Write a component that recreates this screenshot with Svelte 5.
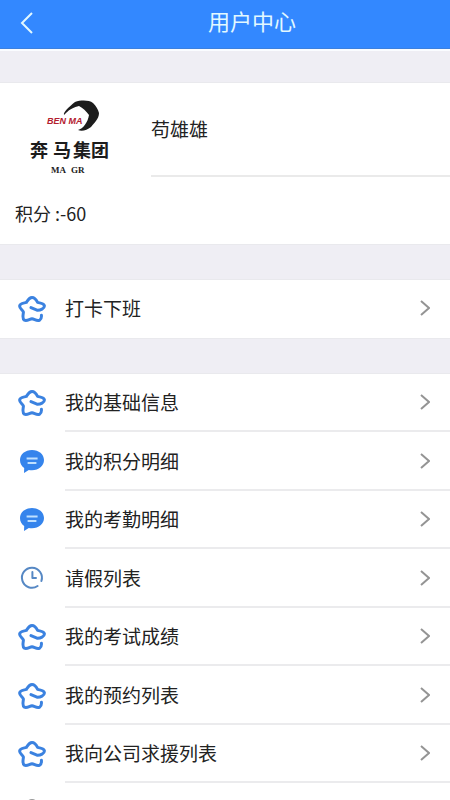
<script lang="ts">
	type Icon = 'star' | 'chat' | 'clock' | 'person';

	interface Item {
		label: string;
		icon: Icon;
	}

	const name = '苟雄雄';
	const points = -60;

	const groups: Item[][] = [
		[{ label: '打卡下班', icon: 'star' }],
		[
			{ label: '我的基础信息', icon: 'star' },
			{ label: '我的积分明细', icon: 'chat' },
			{ label: '我的考勤明细', icon: 'chat' },
			{ label: '请假列表', icon: 'clock' },
			{ label: '我的考试成绩', icon: 'star' },
			{ label: '我的预约列表', icon: 'star' },
			{ label: '我向公司求援列表', icon: 'star' },
			{ label: '', icon: 'person' }
		]
	];
</script>

{#snippet glyph(icon: Icon)}
	<svg class="icon" viewBox="0 0 28 28" aria-hidden="true">
		{#if icon === 'star'}
			<path
				class="line"
				d="M13 12.6 L19 15.2 C22.4 15.4 26.6 13.6 26.4 10.8 C26 8 22.4 8.2 19.6 7.4 C18.4 5 17 2.4 14 2.4 C11 2.4 9.8 5 8.4 7.4 C5.8 8.2 1.8 8 1.6 11 C1.6 13.6 4.6 15 5.4 17 C5.4 19.4 3.8 23.6 6.4 25.2 C9 26.4 11.6 24 14 23.8 C16.4 24 19 26.6 21.6 25.2 C23.6 24 23.6 22 23.4 20.2"
			/>
		{:else if icon === 'chat'}
			<path class="fill" d="M14 2 C20.8 2 26 6.3 26 12 C26 18 20.8 22.2 14 22.2 C12.8 22.2 11.8 22.1 10.8 21.9 L6 25 L6.2 20 C3.5 18.2 2 15.4 2 12 C2 6.3 7.2 2 14 2 Z" />
			<path class="bars" d="M8.6 10.6 H19.6 M9.6 15 H18.4" />
		{:else if icon === 'clock'}
			<path class="line thin" d="M19.6 21 A10 10 0 1 1 23.4 16 M14.4 7 V13 H18" />
		{:else}
			<circle class="line thin grey" cx="14" cy="6" r="5" />
		{/if}
	</svg>
{/snippet}

<div class="page">
	<header class="bar">
		<button class="back" aria-label="返回">
			<svg viewBox="0 0 14 24" aria-hidden="true"><path d="M12 2 L2 12 L12 22" /></svg>
		</button>
		<h1>用户中心</h1>
	</header>

	<main>
		<section class="profile">
			<div class="who">
				<svg class="logo" viewBox="0 0 90 84" role="img" aria-label="BENMA">
					<path d="M39 20 C38 17 44 12 50 7 C56 5 64 5 68 8 C71 11 73 14 74 18 C74 24 69 28 66 32 C62 35 57 37 53 35 C58 34 63 27 64 20 C61 16 58 13 54 11 C49 12 45 14 41 18 Z" />
					<text class="latin" x="22" y="29">BEN MA</text>
					<text class="brand" x="5 28 48 66" y="62">奔马集团</text>
					<text class="group" x="26" y="78">MA</text>
					<text class="group" x="46" y="78">GR</text>
				</svg>
				<div class="name">{name}</div>
			</div>
			<div class="points">积分 :{points}</div>
		</section>

		{#each groups as items}
			<ul class="list">
				{#each items as item}
					<li>
						<button class="row">
							{@render glyph(item.icon)}
							<span class="body">
								<span>{item.label}</span>
								<svg class="arrow" viewBox="0 0 10 18" aria-hidden="true"><path d="M1 2 L9 9 L1 16" /></svg>
							</span>
						</button>
					</li>
				{/each}
			</ul>
		{/each}
	</main>
</div>

<style>
	:global(body) {
		margin: 0;
		background: #efeef4;
	}

	.page {
		height: 100vh;
		overflow: hidden;
		color: #222;
		font-family: 'Noto Sans CJK SC', sans-serif;
		font-size: 19px;
		line-height: 28px;
	}

	.bar {
		display: grid;
		grid-template-columns: 54px 1fr;
		align-items: start;
		height: 48px;
		background: #3388ff;
		border-bottom: 1px solid #3c80de;
		box-shadow: 0 2px 0 #fafcff;
	}

	h1 {
		margin: 0;
		color: #e2f8ff;
		font-size: 22px;
		font-weight: 400;
		line-height: 40px;
		text-align: center;
	}

	button {
		margin: 0;
		padding: 0;
		border: 0;
		background: none;
		color: inherit;
		font: inherit;
		text-align: left;
		cursor: pointer;
	}

	.back {
		display: flex;
		align-items: center;
		justify-content: center;
		height: 46px;
	}

	.back svg {
		width: 14px;
		height: 24px;
		fill: none;
		stroke: #e2f8ff;
		stroke-width: 2;
	}

	main {
		display: flex;
		flex-direction: column;
		gap: 36px;
		padding-top: 34px;
	}

	.profile,
	.list {
		background: #fff;
		box-shadow: 0 0 0 1px #e9e9ed;
	}

	.who {
		display: flex;
		gap: 36px;
		padding-left: 25px;
	}

	.logo {
		flex: none;
		width: 90px;
		height: 84px;
		margin-top: 12px;
		fill: #1c1c1c;
	}

	.latin {
		fill: #b3202e;
		font: italic bold 9px 'Liberation Sans', sans-serif;
	}

	.brand {
		font-size: 18px;
		font-weight: 700;
	}

	.group {
		font: bold 9px 'Liberation Serif', serif;
	}

	.name {
		flex: 1;
		display: flex;
		align-items: center;
		height: 92px;
		border-bottom: 2px solid #eaeaea;
	}

	.points {
		padding: 20px 15px 17px;
		font-size: 18px;
	}

	.list {
		display: grid;
		grid-auto-rows: 58px 59px;
		margin: 0;
		padding: 0;
		list-style: none;
	}

	.row {
		display: flex;
		align-items: center;
		gap: 19px;
		width: 100%;
		height: 100%;
		padding-left: 18px;
	}

	.icon {
		flex: none;
		width: 28px;
		height: 28px;
	}

	.line {
		fill: none;
		stroke: #3b82e0;
		stroke-width: 3;
		stroke-linecap: round;
		stroke-linejoin: round;
	}

	.thin {
		stroke: #5688c4;
		stroke-width: 2;
	}

	.grey {
		stroke: #999;
	}

	.fill {
		fill: #3584ec;
	}

	.bars {
		stroke: #bfe0ff;
		stroke-width: 2;
	}

	.body {
		flex: 1;
		display: flex;
		align-items: center;
		justify-content: space-between;
		box-sizing: border-box;
		height: 100%;
		padding-right: 20px;
		border-bottom: 2px solid #ebebed;
	}

	li:last-child .body {
		border-bottom-color: transparent;
	}

	.arrow {
		width: 10px;
		height: 18px;
		fill: none;
		stroke: #949494;
		stroke-width: 2;
	}
</style>
